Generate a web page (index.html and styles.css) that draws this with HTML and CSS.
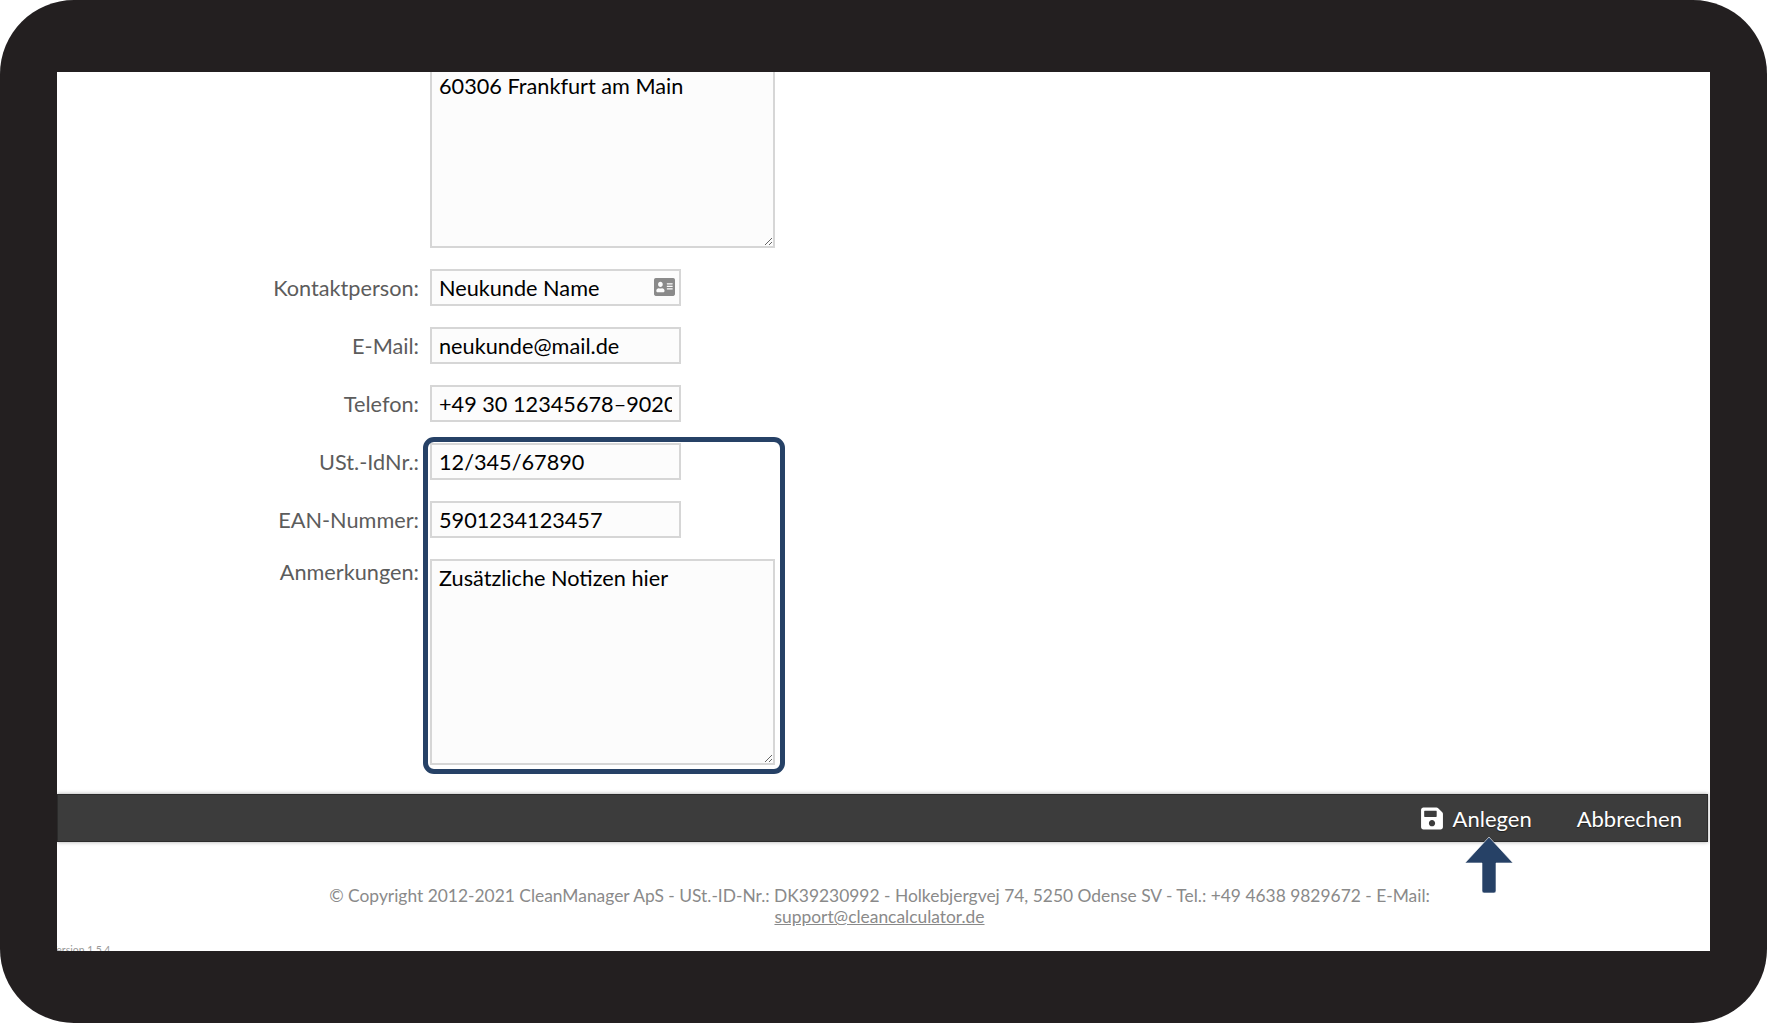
FILE: index.html
```html
<!DOCTYPE html>
<html lang="de">
<head>
    <meta charset="UTF-8">
    <title>Neukunde anlegen</title>
    <link rel="stylesheet" href="styles.css">
</head>
<body>
    <div class="panel">
        <form class="form">
            <div class="form-label"></div>
            <textarea class="field area area-cut">60306 Frankfurt am Main</textarea>

            <label class="form-label">Kontaktperson:</label>
            <div class="input-wrap">
                <input class="field" type="text" value="Neukunde Name">
                <svg class="input-icon" viewBox="0 32 576 448" preserveAspectRatio="none"><path d="M528 32H48C21.5 32 0 53.5 0 80v352c0 26.5 21.5 48 48 48h480c26.5 0 48-21.5 48-48V80c0-26.5-21.5-48-48-48zm-352 96c35.3 0 64 28.7 64 64s-28.7 64-64 64-64-28.7-64-64 28.7-64 64-64zm112 236.8c0 10.6-10 19.2-22.4 19.2H86.4C74 384 64 375.4 64 364.8v-19.2c0-31.8 30.1-57.6 67.2-57.6h5c12.3 5.1 25.7 8 39.8 8s27.6-2.9 39.8-8h5c37.1 0 67.2 25.8 67.2 57.6v19.2zM512 312c0 4.4-3.6 8-8 8H360c-4.4 0-8-3.6-8-8v-16c0-4.4 3.6-8 8-8h144c4.4 0 8 3.6 8 8v16zm0-64c0 4.4-3.6 8-8 8H360c-4.4 0-8-3.6-8-8v-16c0-4.4 3.6-8 8-8h144c4.4 0 8 3.6 8 8v16zm0-64c0 4.4-3.6 8-8 8H360c-4.4 0-8-3.6-8-8v-16c0-4.4 3.6-8 8-8h144c4.4 0 8 3.6 8 8v16z"/></svg>
            </div>

            <label class="form-label">E-Mail:</label>
            <input class="field" type="text" value="neukunde@mail.de">

            <label class="form-label">Telefon:</label>
            <input class="field" type="text" value="+49 30 12345678–90200">

            <label class="form-label">USt.-IdNr.:</label>
            <input class="field" type="text" value="12/345/67890">

            <label class="form-label">EAN-Nummer:</label>
            <input class="field" type="text" value="5901234123457">

            <label class="form-label form-label-top">Anmerkungen:</label>
            <textarea class="field area area-notes">Zusätzliche Notizen hier</textarea>

            <div class="highlight"></div>
        </form>

        <div class="action-bar">
            <button class="action-btn" type="button">
                <svg class="save-icon" viewBox="0 0 448 512"><path d="M433.941 129.941l-83.882-83.882A48 48 0 0 0 316.118 32H48C21.49 32 0 53.49 0 80v352c0 26.51 21.49 48 48 48h352c26.51 0 48-21.49 48-48V163.882a48 48 0 0 0-14.059-33.941zM224 416c-35.346 0-64-28.654-64-64 0-35.346 28.654-64 64-64s64 28.654 64 64c0 35.346-28.654 64-64 64zm96-304.52V212c0 6.627-5.373 12-12 12H76c-6.627 0-12-5.373-12-12V108c0-6.627 5.373-12 12-12h228.52c3.183 0 6.235 1.264 8.485 3.515l3.48 3.48A11.996 11.996 0 0 1 320 111.48z"/></svg>
                Anlegen
            </button>
            <button class="action-btn" type="button">Abbrechen</button>
        </div>

        <footer class="footer">
            <p>© Copyright 2012-2021 CleanManager ApS - USt.-ID-Nr.: DK39230992 - Holkebjergvej 74, 5250 Odense SV - Tel.: +49 4638 9829672 - E-Mail:<br>
            <a href="#">support@cleancalculator.de</a></p>
            <div class="version">Version 1.5.4</div>
        </footer>

        <svg class="arrow" viewBox="0 0 52 60"><path d="M26 1 L50 27 H33 V55 Q33 57 31 57 H21 Q19 57 19 55 V27 H2 Z" fill="#264166" stroke="#fff" stroke-width="0.6" stroke-linejoin="round"/></svg>
    </div>
</body>
</html>
```

FILE: styles.css
```css
* {
    box-sizing: border-box;
}
html {
    background-color: #fff;
}
body {
    margin: 0;
    height: 1023px;
    padding: 72px 57px;
    background-color: #231f20;
    border-radius: 74px;
    font-family: Lato, "Open Sans", sans-serif;
    overflow: hidden;
}
.panel {
    position: relative;
    display: flex;
    flex-direction: column;
    height: 879px;
    background-color: #fff;
    overflow: hidden;
}
.form {
    position: relative;
    display: grid;
    grid-template-columns: 362px 345px;
    column-gap: 11px;
    row-gap: 21px;
    align-items: center;
    padding-bottom: 29px;
}
.form-label {
    text-align: right;
    font-size: 21.7px;
    color: #5c5c5c;
}
.form-label-top {
    align-self: start;
}
.field {
    display: block;
    width: 251px;
    height: 37px;
    padding: 0 7px;
    border: 2px solid #d6d6d6;
    background-color: #fcfcfc;
    color: #000;
    font-family: inherit;
    font-size: 21.7px;
    outline: none;
}
.area {
    width: 345px;
    padding-top: 1px;
}
.area-cut {
    height: 176px;
    border-top: none;
}
.area-notes {
    height: 206px;
    padding-top: 4px;
}
.input-wrap {
    position: relative;
    width: 251px;
}
.input-icon {
    position: absolute;
    top: 9px;
    right: 6px;
    width: 21px;
    height: 18px;
    fill: #8a8a8a;
}
.highlight {
    position: absolute;
    left: 366px;
    top: 365px;
    width: 362px;
    height: 337px;
    border: 5px solid #264166;
    border-radius: 11px;
    pointer-events: none;
}
.action-bar {
    display: flex;
    justify-content: flex-end;
    align-items: center;
    gap: 45px;
    height: 48px;
    margin-right: 2px;
    padding-right: 25px;
    background-color: #3c3c3c;
    border: 1px solid #2b2b2b;
    box-shadow: 0 0 4px rgba(0, 0, 0, 0.35);
}
.action-btn {
    display: flex;
    align-items: center;
    gap: 10px;
    padding: 0;
    border: none;
    background: none;
    color: #fff;
    font-family: inherit;
    font-size: 22px;
    text-shadow: 0 1px 1px rgba(0, 0, 0, 0.5);
}
.save-icon {
    width: 22px;
    height: 25px;
    fill: #fff;
}
.footer {
    position: relative;
    flex-grow: 1;
    padding: 43px 8px 0 0;
    text-align: center;
    font-size: 17.4px;
    line-height: 21px;
    color: #8a8a8a;
}
.footer p {
    margin: 0;
}
.footer a {
    color: #8a8a8a;
}
.version {
    position: absolute;
    left: -7px;
    bottom: -6px;
    font-size: 10.5px;
    line-height: 14px;
    color: #999;
}
.arrow {
    position: absolute;
    left: 1406px;
    top: 764px;
    width: 52px;
    height: 60px;
}
```
